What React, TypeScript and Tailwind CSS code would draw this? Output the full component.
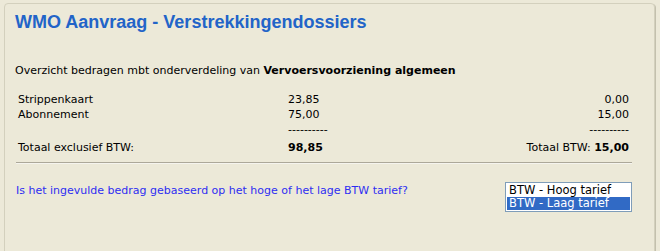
import React from 'react';

const rows = [
  { label: 'Strippenkaart', amount: '23,85', btw: '0,00' },
  { label: 'Abonnement', amount: '75,00', btw: '15,00' },
];

export default function App() {
  return (
    <main className="w-[660px] h-[251px] overflow-hidden bg-[#ece9d8] pt-[3px] pl-[4px] pr-[5px] font-['DejaVu_Sans',sans-serif] text-[11px] text-black">
      {/* Panel */}
      <div className="h-[260px] rounded-[4px] border border-[#d3d0bd] shadow-[1px_1px_0_#c3c0ad] bg-[#ece9d8] pl-[10px] pr-[22px]">
        <h1 className="pt-[7px] font-['Liberation_Sans',Arial,sans-serif] text-[18px] font-bold leading-[22px] text-[#2264c8]">
          WMO Aanvraag - Verstrekkingendossiers
        </h1>

        <p className="mt-[31px] leading-[14px]">
          Overzicht bedragen mbt onderverdeling van <b>Vervoersvoorziening algemeen</b>
        </p>

        {/* Bedragen */}
        <div className="mt-[14px] pl-[3px] pr-[3px] leading-[15px]">
          {rows.map((r) => (
            <div key={r.label} className="flex">
              <span className="w-[270px]">{r.label}</span>
              <span className="w-[60px]">{r.amount}</span>
              <span className="flex-1 text-right">{r.btw}</span>
            </div>
          ))}
          <div className="flex">
            <span className="w-[270px]" />
            <span className="w-[60px]">----------</span>
            <span className="flex-1 text-right">----------</span>
          </div>
          <div className="flex mt-[3px]">
            <span className="w-[270px]">Totaal exclusief BTW:</span>
            <span className="w-[60px] font-bold">98,85</span>
            <span className="flex-1 text-right">
              Totaal BTW: <b>15,00</b>
            </span>
          </div>
        </div>

        <div className="mt-[7px] ml-[1px] h-[2px] border-t border-[#aca899] border-b border-b-[#f5f4ee]" />

        {/* Vraag */}
        <div className="mt-[18px] flex items-start justify-between">
          <p className="ml-[1px] mt-[2px] leading-[14px] text-[#2e2ef2]">
            Is het ingevulde bedrag gebaseerd op het hoge of het lage BTW tarief?
          </p>
          <div className="w-[127px] border border-[#7f9db9] bg-white p-[1px] text-[11.5px] leading-[13px]">
            <div className="px-[2px]">BTW - Hoog tarief</div>
            <div className="px-[2px] bg-[#316ac5] text-white">BTW - Laag tarief</div>
          </div>
        </div>
      </div>
    </main>
  );
}
